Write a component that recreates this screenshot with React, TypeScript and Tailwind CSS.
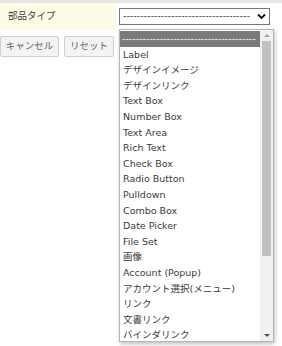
import React from "react";

const items = [
	"Label",
	"デザインイメージ",
	"デザインリンク",
	"Text Box",
	"Number Box",
	"Text Area",
	"Rich Text",
	"Check Box",
	"Radio Button",
	"Pulldown",
	"Combo Box",
	"Date Picker",
	"File Set",
	"画像",
	"Account (Popup)",
	"アカウント選択(メニュー)",
	"リンク",
	"文書リンク",
	"バインダリンク",
];

const selectDashes = "-".repeat(37);
const rowDashes = "-".repeat(39);

function DropdownList() {
	return (
		<div className="absolute left-[119px] top-[29px] flex h-[313px] w-[155px] border border-[#b5b5b5] bg-white shadow-[1px_2px_4px_rgba(0,0,0,0.25)]">
			{/* 選択肢 */}
			<ul className="min-w-0 flex-1 pt-px">
				<li className="h-[15.6px] whitespace-nowrap bg-[#7a7a7a] pl-[2px] leading-[15.6px] text-white">
					{rowDashes}
				</li>
				{items.map((item) => (
					<li key={item} className="h-[15.6px] whitespace-nowrap pl-[3px] leading-[15.6px] text-[#3a3a3a]">
						{item}
					</li>
				))}
			</ul>

			{/* スクロールバー */}
			<div className="flex w-[13px] flex-col bg-[#f1f1f1]">
				<div className="flex h-[11px] items-center justify-center">
					<div className="h-0 w-0 border-x-[3px] border-b-[3px] border-x-transparent border-b-[#a3a3a3]" />
				</div>
				<div className="mx-[2px] h-[215px] bg-[#c1c1c1]" />
				<div className="flex-1" />
				<div className="flex h-[11px] items-center justify-center">
					<div className="h-0 w-0 border-x-[3px] border-t-[3px] border-x-transparent border-t-[#505050]" />
				</div>
			</div>
		</div>
	);
}

export default function App() {
	return (
		<div
			className="relative h-[346px] w-[282px] overflow-hidden bg-white text-[9.5px]"
			style={{ fontFamily: '"DejaVu Sans", "Noto Sans CJK JP", sans-serif' }}
		>
			<div className="h-[3px] bg-[#e6e6e6]" />

			{/* 部品タイプ */}
			<div className="flex h-[27px]">
				<div className="flex w-[116px] items-center bg-[#fdfce6] pl-[8px] text-[#3a3a3a]">部品タイプ</div>
				<div className="flex flex-1 items-center pl-[3px]">
					<div className="flex h-[17px] w-[151px] items-center justify-between border border-[#767676] bg-white pl-[3px] pr-[3px]">
						<span className="whitespace-nowrap text-[#333]">{selectDashes}</span>
						<svg width="9" height="7" viewBox="0 0 9 7" className="shrink-0">
							<path d="M1 1.5 L4.5 5 L8 1.5" fill="none" stroke="#111" strokeWidth="1.8" />
						</svg>
					</div>
				</div>
			</div>

			{/* ボタン */}
			<div className="mt-[6px] flex gap-[5px]">
				<button className="h-[21px] w-[59px] rounded-[2px] border border-[#cfcfcf] bg-[#f3f3f3] text-[#666]">
					キャンセル
				</button>
				<button className="h-[21px] w-[50px] rounded-[2px] border border-[#cfcfcf] bg-[#f3f3f3] text-[#666]">
					リセット
				</button>
			</div>

			<DropdownList />
		</div>
	);
}
